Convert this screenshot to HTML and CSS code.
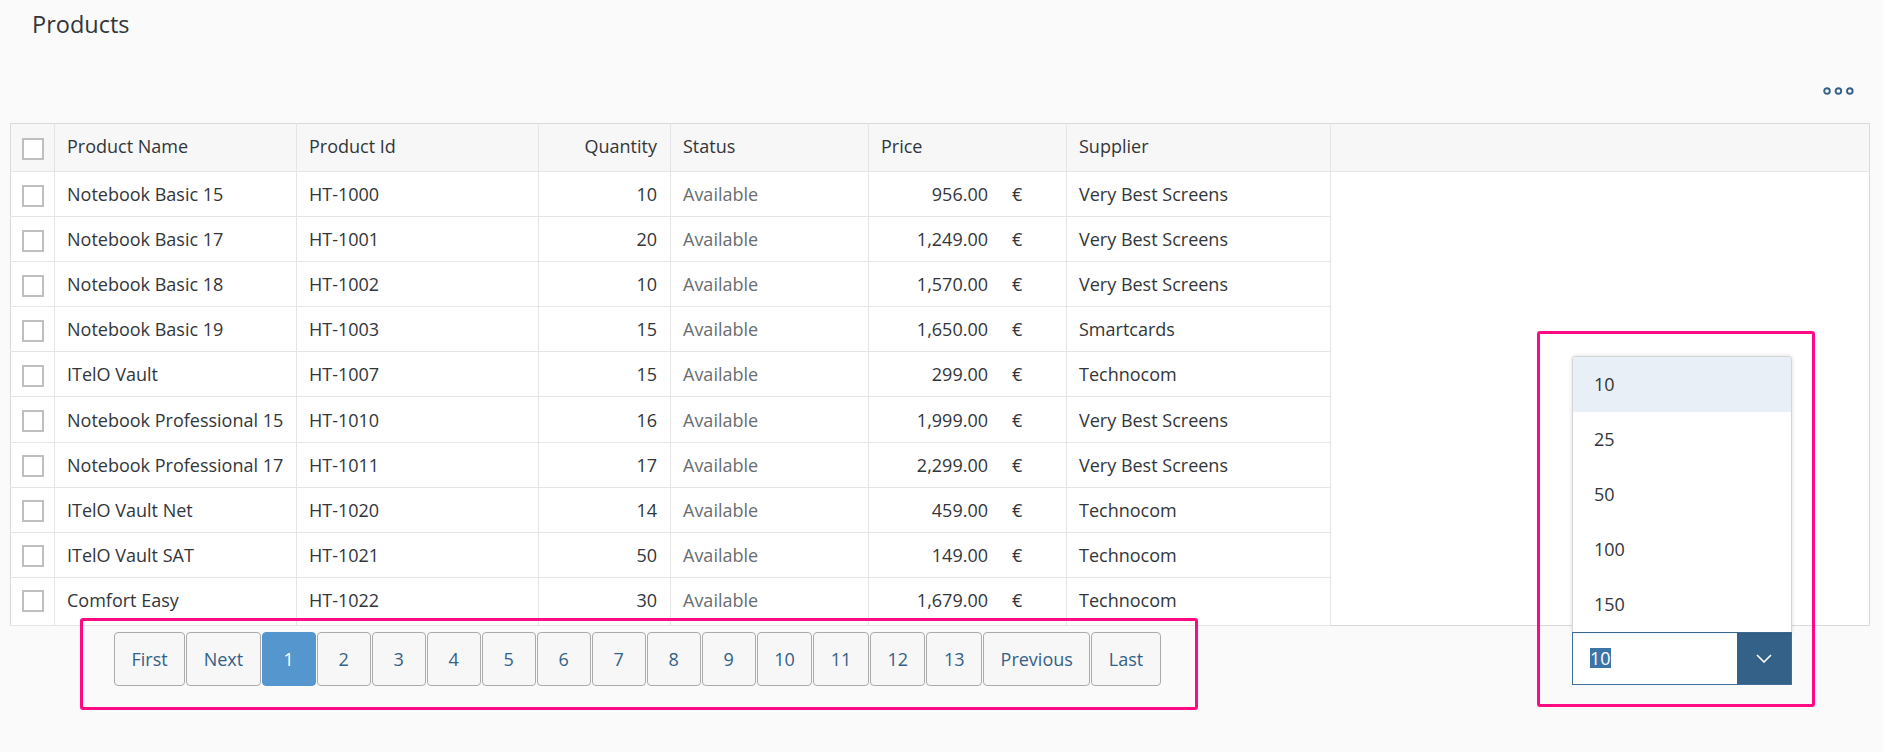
FILE: index.html
```html
<!DOCTYPE html>
<html lang="en">
<head>
<meta charset="utf-8">
<title>Products</title>
<link rel="stylesheet" href="styles.css">
</head>
<body>
<div class="page">
  <h1 class="title">Products</h1>
  <div class="toolbar">
    <button class="overflow" aria-label="More">
      <svg width="31" height="8" viewBox="0 0 31 8"><circle cx="4" cy="4" r="2.8"/><circle cx="15.4" cy="4" r="2.8"/><circle cx="26.8" cy="4" r="2.8"/></svg>
    </button>
  </div>
  <table class="grid">
    <colgroup>
      <col class="c-cb"><col class="c-name"><col class="c-id"><col class="c-qty"><col class="c-status"><col class="c-price"><col class="c-supplier"><col>
    </colgroup>
    <thead>
      <tr>
        <th class="cb"><span class="box"></span></th>
        <th>Product Name</th>
        <th>Product Id</th>
        <th class="right">Quantity</th>
        <th>Status</th>
        <th>Price</th>
        <th>Supplier</th>
        <th class="rest"></th>
      </tr>
    </thead>
    <tbody>
      <tr><td class="cb"><span class="box"></span></td><td>Notebook Basic 15</td><td>HT-1000</td><td class="right">10</td><td class="status">Available</td><td><div class="price"><span>956.00</span><span class="cur">€</span></div></td><td>Very Best Screens</td><td class="rest"></td></tr>
      <tr><td class="cb"><span class="box"></span></td><td>Notebook Basic 17</td><td>HT-1001</td><td class="right">20</td><td class="status">Available</td><td><div class="price"><span>1,249.00</span><span class="cur">€</span></div></td><td>Very Best Screens</td><td class="rest"></td></tr>
      <tr><td class="cb"><span class="box"></span></td><td>Notebook Basic 18</td><td>HT-1002</td><td class="right">10</td><td class="status">Available</td><td><div class="price"><span>1,570.00</span><span class="cur">€</span></div></td><td>Very Best Screens</td><td class="rest"></td></tr>
      <tr><td class="cb"><span class="box"></span></td><td>Notebook Basic 19</td><td>HT-1003</td><td class="right">15</td><td class="status">Available</td><td><div class="price"><span>1,650.00</span><span class="cur">€</span></div></td><td>Smartcards</td><td class="rest"></td></tr>
      <tr><td class="cb"><span class="box"></span></td><td>ITelO Vault</td><td>HT-1007</td><td class="right">15</td><td class="status">Available</td><td><div class="price"><span>299.00</span><span class="cur">€</span></div></td><td>Technocom</td><td class="rest"></td></tr>
      <tr><td class="cb"><span class="box"></span></td><td>Notebook Professional 15</td><td>HT-1010</td><td class="right">16</td><td class="status">Available</td><td><div class="price"><span>1,999.00</span><span class="cur">€</span></div></td><td>Very Best Screens</td><td class="rest"></td></tr>
      <tr><td class="cb"><span class="box"></span></td><td>Notebook Professional 17</td><td>HT-1011</td><td class="right">17</td><td class="status">Available</td><td><div class="price"><span>2,299.00</span><span class="cur">€</span></div></td><td>Very Best Screens</td><td class="rest"></td></tr>
      <tr><td class="cb"><span class="box"></span></td><td>ITelO Vault Net</td><td>HT-1020</td><td class="right">14</td><td class="status">Available</td><td><div class="price"><span>459.00</span><span class="cur">€</span></div></td><td>Technocom</td><td class="rest"></td></tr>
      <tr><td class="cb"><span class="box"></span></td><td>ITelO Vault SAT</td><td>HT-1021</td><td class="right">50</td><td class="status">Available</td><td><div class="price"><span>149.00</span><span class="cur">€</span></div></td><td>Technocom</td><td class="rest"></td></tr>
      <tr class="last"><td class="cb"><span class="box"></span></td><td>Comfort Easy</td><td>HT-1022</td><td class="right">30</td><td class="status">Available</td><td><div class="price"><span>1,679.00</span><span class="cur">€</span></div></td><td>Technocom</td><td class="rest"></td></tr>
    </tbody>
  </table>
  <div class="footer">
    <div class="pager-wrap">
      <div class="highlight hl-pager"></div>
      <nav class="pager">
        <button class="pbtn">First</button>
        <button class="pbtn">Next</button>
        <button class="pbtn active">1</button>
        <button class="pbtn">2</button>
        <button class="pbtn">3</button>
        <button class="pbtn">4</button>
        <button class="pbtn">5</button>
        <button class="pbtn">6</button>
        <button class="pbtn">7</button>
        <button class="pbtn">8</button>
        <button class="pbtn">9</button>
        <button class="pbtn">10</button>
        <button class="pbtn">11</button>
        <button class="pbtn">12</button>
        <button class="pbtn">13</button>
        <button class="pbtn">Previous</button>
        <button class="pbtn">Last</button>
      </nav>
    </div>
    <div class="select">
      <div class="highlight hl-select"></div>
      <ul class="list">
        <li class="sel">10</li>
        <li>25</li>
        <li>50</li>
        <li>100</li>
        <li>150</li>
      </ul>
      <div class="field">
        <span class="value"><span class="selected-text">10</span></span>
        <span class="arrow">
          <svg width="16" height="9" viewBox="0 0 16 9"><polyline points="1,1 8,8 15,1"/></svg>
        </span>
      </div>
    </div>
  </div>
</div>
</body>
</html>
```
FILE: styles.css
```css
* { box-sizing: border-box; }
html, body {
  margin: 0;
  background: #fafafa;
  font-family: "Open Sans", "Noto Sans", Arial, sans-serif;
  color: #32363a;
}
.page {
  padding: 8px 13px 0 10px;
  height: 752px;
}
.title {
  margin: 0;
  padding-left: 22px;
  font-size: 23.5px;
  font-weight: 400;
  line-height: 32px;
  color: #32363a;
}
.toolbar {
  height: 83px;
  display: flex;
  justify-content: flex-end;
  align-items: flex-start;
  padding: 47px 16px 0 0;
}
.overflow {
  border: 0;
  background: transparent;
  padding: 0;
  margin: 0;
  display: block;
  line-height: 0;
}
.overflow circle {
  fill: none;
  stroke: #346187;
  stroke-width: 1.9;
}
.grid {
  width: 100%;
  table-layout: fixed;
  border-collapse: collapse;
  border: 1px solid #d9d9d9;
  background: #fff;
  font-size: 18px;
}
.c-cb { width: 44px; }
.c-name { width: 242px; }
.c-id { width: 242px; }
.c-qty { width: 132px; }
.c-status { width: 198px; }
.c-price { width: 198px; }
.c-supplier { width: 264px; }
.grid th, .grid td {
  padding: 0 13px 0 12px;
  text-align: left;
  font-weight: 400;
  white-space: nowrap;
  border-right: 1px solid #e5e5e5;
  border-bottom: 1px solid #e5e5e5;
  vertical-align: middle;
}
.grid th {
  background: #f7f7f7;
  height: 48px;
  padding-bottom: 3px;
  color: #32363a;
}
.grid td {
  height: 45.1px;
}
.grid tr.last td {
  height: 48px;
  padding-bottom: 3px;
}
.grid td.rest {
  border: 0;
}
.grid th.rest {
  border-right: 0;
}
.grid .right { text-align: right; }
.grid .cb { padding: 0; text-align: center; }
.grid tr.last td.cb { padding-bottom: 3px; }
.grid .status { color: #6a6d70; }
.box {
  display: inline-block;
  width: 22px;
  height: 22px;
  border: 2px solid #bfbfbf;
  background: #fff;
  vertical-align: middle;
  margin-left: 1px;
}
.price {
  display: flex;
  justify-content: flex-end;
}
.price .cur {
  width: 41px;
  margin-left: 24px;
}
.footer {
  display: flex;
  justify-content: space-between;
  align-items: flex-start;
  padding: 6px 78px 0 104px;
}
.pager-wrap {
  position: relative;
}
.pager {
  display: flex;
  gap: 1px;
}
.pbtn {
  min-width: 54px;
  height: 54px;
  padding: 0 16.5px;
  border: 1px solid #ababab;
  border-radius: 4px;
  background: #f7f7f7;
  color: #346187;
  font-family: "Open Sans", "Noto Sans", Arial, sans-serif;
  font-size: 18px;
  margin: 0;
}
.pbtn.active {
  background: #5496cd;
  border-color: #5496cd;
  color: #fff;
}
.highlight {
  position: absolute;
  border: 3px solid #ff0a84;
  border-radius: 3px;
  pointer-events: none;
}
.hl-pager {
  left: -34px;
  top: -14px;
  width: 1118px;
  height: 92px;
}
.select {
  position: relative;
  width: 220px;
}
.hl-select {
  left: -35px;
  top: -301px;
  width: 278px;
  height: 376px;
}
.list {
  position: absolute;
  left: 0;
  bottom: 100%;
  width: 220px;
  margin: 0;
  padding: 0;
  list-style: none;
  background: #fff;
  border: 1px solid #d5d5d5;
  border-bottom: 0;
  border-radius: 4px 4px 0 0;
  box-shadow: 0 0 4px rgba(0, 0, 0, 0.15);
  overflow: hidden;
  font-size: 18px;
}
.list li {
  height: 55px;
  line-height: 55px;
  padding-left: 21px;
  color: #32363a;
}
.list li.sel {
  background: #e8eff6;
}
.field {
  display: flex;
  height: 53px;
  border: 1px solid #3f6f9b;
  background: #fff;
}
.value {
  flex: 1;
  display: flex;
  align-items: center;
  padding-left: 17px;
  font-size: 18px;
}
.selected-text {
  background: #3d74a8;
  color: #fff;
  line-height: 20px;
}
.arrow {
  width: 54px;
  background: #346187;
  display: flex;
  align-items: center;
  justify-content: center;
}
.arrow polyline {
  fill: none;
  stroke: #fff;
  stroke-width: 1.6;
}
```
